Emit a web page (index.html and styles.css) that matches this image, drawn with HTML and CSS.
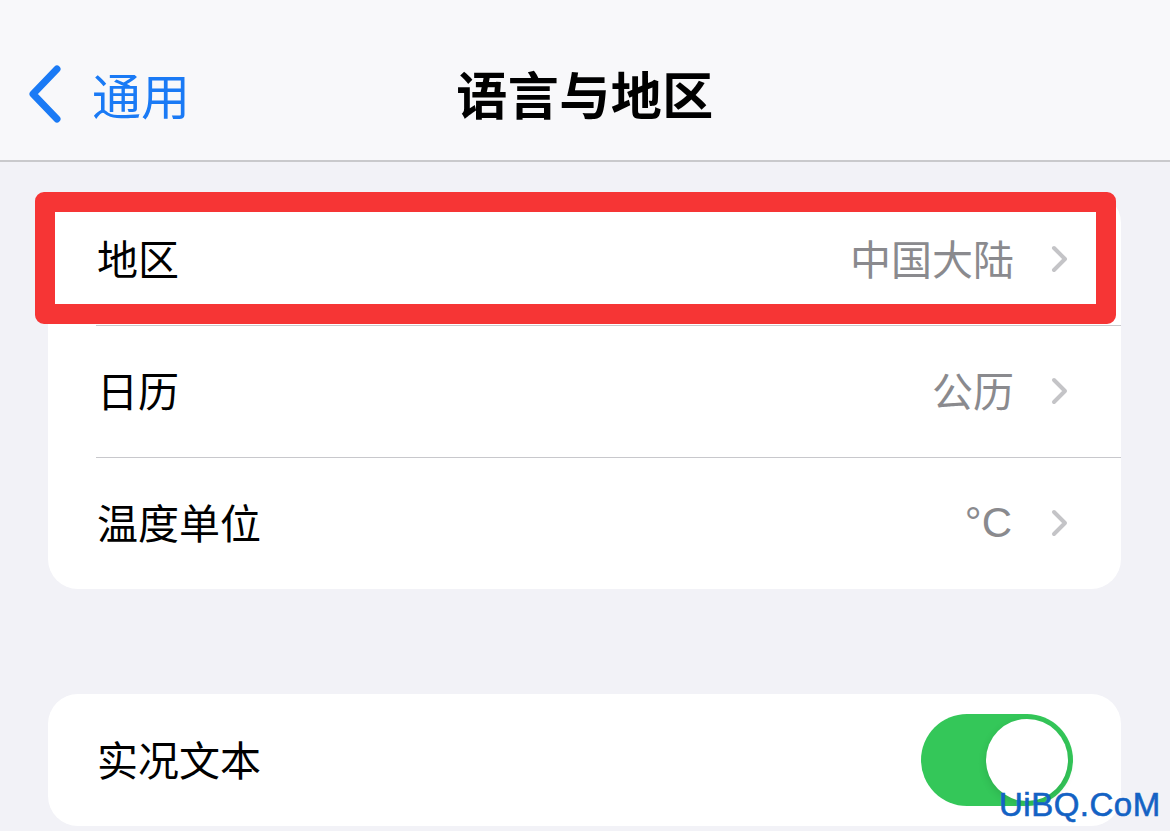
FILE: index.html
```html
<!DOCTYPE html>
<html lang="zh-CN">

<head>
    <meta charset="UTF-8">
    <meta name="viewport" content="width=device-width, initial-scale=1.0">
    <title>语言与地区</title>
    <link rel="stylesheet" href="styles.css">
</head>

<body>
    <header class="nav">
        <a class="back" href="#">
            <svg class="back-icon" width="36" height="58" viewBox="0 0 36 58">
                <path d="M30 4 L6 29 L30 54" fill="none" stroke="#1a7af5" stroke-width="7" stroke-linecap="round" stroke-linejoin="round"/>
            </svg>
            <span>通用</span>
        </a>
        <h1 class="title">语言与地区</h1>
        <div></div>
    </header>

    <main class="content">
        <section class="group">
            <div class="row highlighted">
                <span class="label">地区</span>
                <span class="value">中国大陆</span>
                <svg class="chev" width="20" height="28" viewBox="0 0 20 28">
                    <path d="M4 3 L15 14 L4 25" fill="none" stroke="#c4c4c7" stroke-width="4" stroke-linecap="round" stroke-linejoin="round"/>
                </svg>
                <div class="mark"></div>
            </div>
            <div class="row">
                <span class="label">日历</span>
                <span class="value">公历</span>
                <svg class="chev" width="20" height="28" viewBox="0 0 20 28">
                    <path d="M4 3 L15 14 L4 25" fill="none" stroke="#c4c4c7" stroke-width="4" stroke-linecap="round" stroke-linejoin="round"/>
                </svg>
            </div>
            <div class="row">
                <span class="label">温度单位</span>
                <span class="value temp">°C</span>
                <svg class="chev" width="20" height="28" viewBox="0 0 20 28">
                    <path d="M4 3 L15 14 L4 25" fill="none" stroke="#c4c4c7" stroke-width="4" stroke-linecap="round" stroke-linejoin="round"/>
                </svg>
            </div>
        </section>

        <section class="group">
            <div class="row">
                <span class="label">实况文本</span>
                <div class="toggle on"><div class="knob"></div></div>
            </div>
        </section>
    </main>

    <div class="watermark">UiBQ.CoM</div>
</body>

</html>
```

FILE: styles.css
```css
body {
    margin: 0;
    background-color: #f2f2f7;
    font-family: "Noto Sans CJK SC", "Noto Sans", sans-serif;
    color: #000;
    overflow: hidden;
}

.nav {
    height: 162px;
    background-color: #f8f8fa;
    border-bottom: 2px solid #c9c9cc;
    display: grid;
    grid-template-columns: 1fr auto 1fr;
    align-items: center;
    box-sizing: border-box;
    padding-top: 26px;
}

.back {
    display: flex;
    align-items: center;
    gap: 29px;
    padding-left: 27px;
    color: #1a7af5;
    text-decoration: none;
    font-size: 49px;
}

.back-icon {
    margin-top: 2px;
}

.title {
    margin: 0;
    font-size: 51px;
    font-weight: 700;
    letter-spacing: 0.5px;
}

.content {
    padding: 31px 49px 0 48px;
    display: flex;
    flex-direction: column;
    gap: 105px;
}

.group {
    background-color: #fff;
    border-radius: 30px;
}

.row {
    position: relative;
    height: 132px;
    display: flex;
    align-items: center;
    padding: 0 51px 0 49px;
}

.row + .row::before {
    content: "";
    position: absolute;
    top: 0;
    left: 48px;
    right: 0;
    height: 1px;
    background-color: #c8c8cc;
}

.label {
    flex: 1;
    font-size: 41px;
    margin-top: -4px;
}

.value {
    font-size: 41px;
    color: #8a8a8e;
    margin-right: 36px;
    margin-top: -4px;
}

.value.temp {
    font-family: "Liberation Sans", Arial, sans-serif;
    font-size: 42px;
    margin-top: 0;
    margin-right: 38px;
}

.chev {
    display: block;
}

.mark {
    position: absolute;
    left: -13px;
    right: 5px;
    top: -1px;
    bottom: 1px;
    border: 20px solid #f63535;
    border-radius: 9px;
}

.toggle {
    width: 152px;
    height: 92px;
    border-radius: 46px;
    background-color: #34c759;
    position: relative;
    margin-right: -3px;
}

.toggle .knob {
    position: absolute;
    right: 5px;
    top: 5px;
    width: 82px;
    height: 82px;
    border-radius: 50%;
    background-color: #fff;
    box-shadow: 0 3px 8px rgba(0, 0, 0, 0.12);
}

.watermark {
    position: absolute;
    left: 999px;
    top: 786px;
    font-family: "Liberation Sans", Arial, sans-serif;
    font-size: 33px;
    color: #1362c4;
    letter-spacing: 0.5px;
    -webkit-text-stroke: 0.6px #1362c4;
}
```
